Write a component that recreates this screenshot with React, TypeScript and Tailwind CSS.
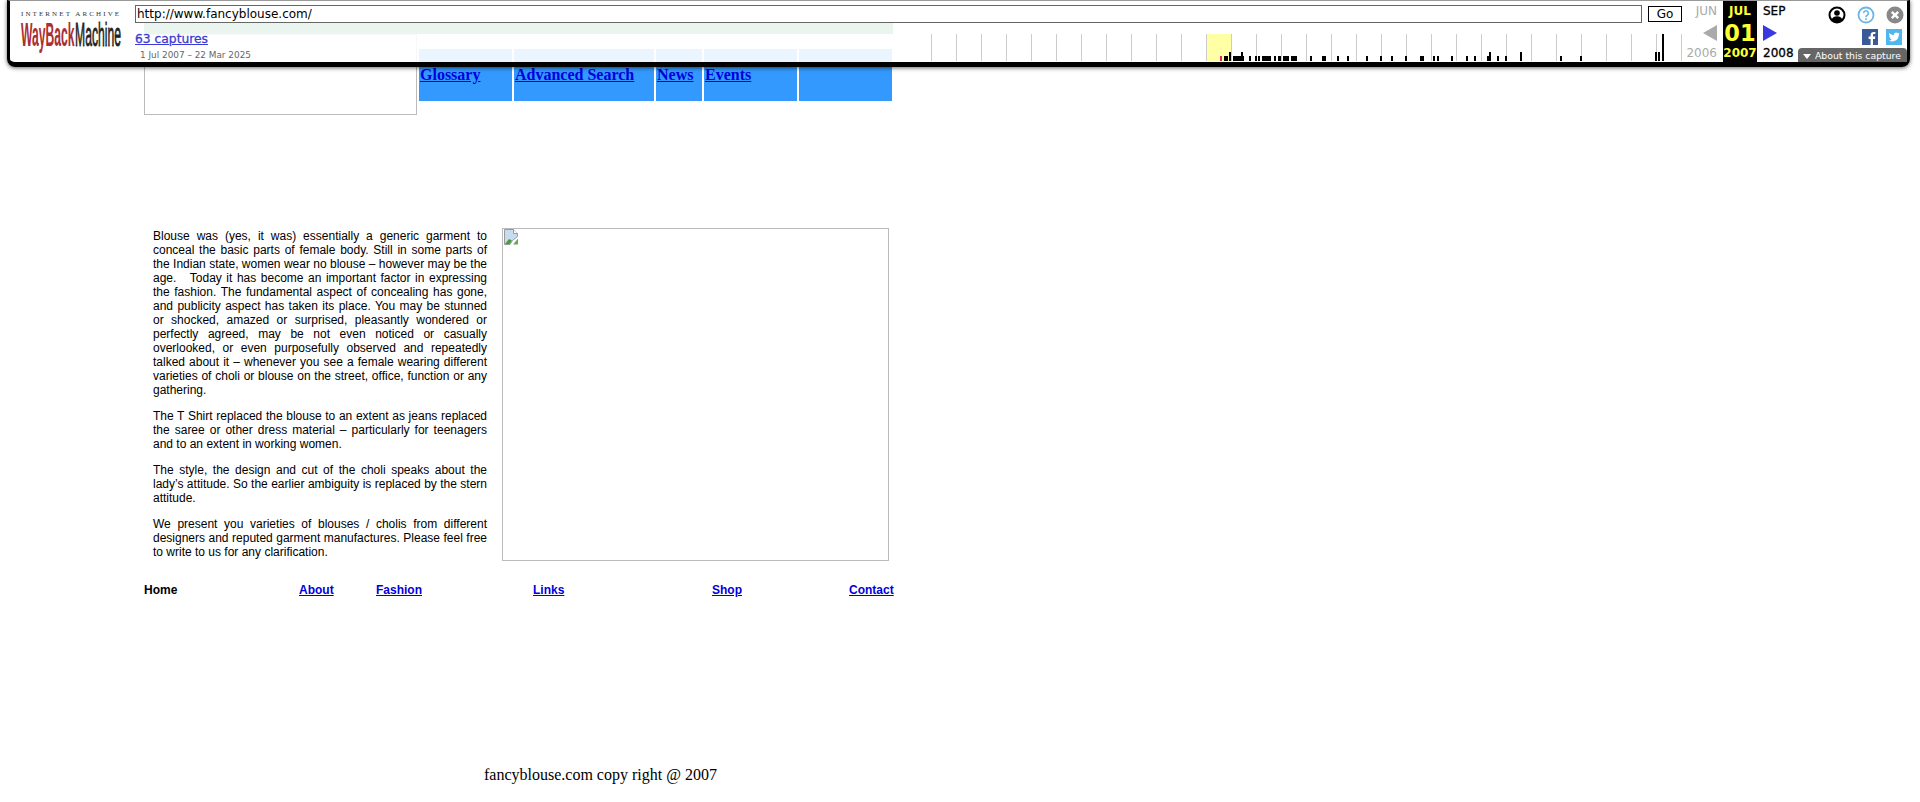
const ticks = Array.from({ length: 31 }, (_, i) => i * 25 + 1);

// x, width, height of each capture bar, measured from the left edge of the chart at x=930
const bars: [number, number, number][] = [
  [294, 4, 5], [299, 2, 9], [303, 11, 5], [311, 2, 9], [319, 2, 5], [325, 2, 5], [328, 2, 5],
  [332, 9, 5], [344, 2, 5], [348, 3, 5], [353, 6, 5], [361, 6, 5], [380, 2, 5], [392, 4, 5],
  [407, 2, 5], [417, 2, 5], [436, 2, 5], [450, 2, 5], [461, 2, 5], [475, 2, 5], [490, 4, 5],
  [503, 2, 5], [507, 2, 5], [521, 2, 5], [536, 2, 5], [544, 2, 5], [557, 2, 5], [559, 2, 9],
  [567, 2, 5], [575, 2, 5], [590, 2, 9], [630, 2, 5], [650, 2, 5], [725, 2, 9], [728, 2, 9],
  [732, 2, 27],
];

function Sparkline() {
  return (
    <svg width="754" height="27" viewBox="0 0 754 27" className="block">
      <rect x="276" y="0" width="25" height="27" fill="#ffffa5" />
      {ticks.map((x) => (
        <rect key={x} x={x} y="0" width="1" height="27" fill="#ccc" />
      ))}
      <rect x="290" y="22" width="2" height="5" fill="#e0246c" />
      {bars.map(([x, w, h]) => (
        <rect key={x} x={x} y={27 - h} width={w} height={h} fill="#000" />
      ))}
    </svg>
  );
}

function Logo() {
  return (
    <svg width="102" height="42" viewBox="0 0 102 42" className="block overflow-visible">
      <text x="0" y="6" fontSize="7" letterSpacing="2.1" fontFamily="'Liberation Serif', serif" fill="#333">
        INTERNET ARCHIVE
      </text>
      <text transform="translate(0 36) scale(0.368 1)" fontSize="33" fontWeight="700" fontFamily="'Liberation Sans', sans-serif" fill="#ab2e33">
        WayBack
      </text>
      <text transform="translate(54 36) scale(0.369 1)" fontSize="33" fontFamily="'Liberation Sans', sans-serif" fill="#222" stroke="#222" strokeWidth="0.8">
        Machine
      </text>
    </svg>
  );
}

const UserIcon = () => (
  <svg width="18" height="18" viewBox="0 0 18 18">
    <circle cx="9" cy="9" r="7.5" fill="#fff" stroke="#000" strokeWidth="2" />
    <circle cx="9" cy="7" r="2.8" fill="#000" />
    <path d="M3.5 14c1-3 3-3.8 5.5-3.8s4.5.8 5.5 3.8a7.5 7.5 0 0 1-11 0z" fill="#000" />
  </svg>
);

const HelpIcon = () => (
  <svg width="18" height="18" viewBox="0 0 18 18">
    <circle cx="9" cy="9" r="7.5" fill="#fff" stroke="#6bb5e8" strokeWidth="1.8" />
    <path d="M6.6 7.2a2.4 2.4 0 1 1 3.6 2.1c-.8.5-1.2.9-1.2 1.9" fill="none" stroke="#6bb5e8" strokeWidth="1.6" />
    <circle cx="9" cy="13.2" r="1" fill="#6bb5e8" />
  </svg>
);

const CloseIcon = () => (
  <svg width="18" height="18" viewBox="0 0 18 18">
    <circle cx="9" cy="9" r="8.5" fill="#888" />
    <path d="M5.8 5.8l6.4 6.4M12.2 5.8l-6.4 6.4" stroke="#fff" strokeWidth="2.4" />
  </svg>
);

const FacebookIcon = () => (
  <svg width="16" height="16" viewBox="0 0 16 16">
    <rect width="16" height="16" fill="#3b5998" />
    <path d="M11 16v-6h2l.3-2.4H11V6.2c0-.7.2-1.1 1.2-1.1h1.2V3c-.3 0-1-.1-1.8-.1-1.8 0-3 1.1-3 3v1.7h-2V10h2v6z" fill="#fff" />
  </svg>
);

const TwitterIcon = () => (
  <svg width="16" height="16" viewBox="0 0 16 16">
    <rect width="16" height="16" fill="#4fb6ee" />
    <path d="M13.5 4.6c-.4.2-.8.3-1.3.4.5-.3.8-.7 1-1.2-.4.3-.9.4-1.4.5a2.2 2.2 0 0 0-3.8 2C6.200 6.200 4.600 5.300 3.500 4c-.6 1-.3 2.300.7 3-.4 0-.7-.1-1-.3 0 1.100.8 2 1.800 2.200-.3.1-.7.1-1 0 .3.900 1.100 1.500 2.100 1.500-1 .8-2.200 1.100-3.300 1 4.800 2.800 10.300-.4 10-5.800.4-.3.8-.6 1.200-1z" fill="#fff" />
  </svg>
);

const BrokenImage = () => (
  <svg width="16" height="16" viewBox="0 0 16 16" className="block">
    <path d="M1.500 .5h9l4 4v3l-5 4-2.500 4h-5.500z" fill="#c8dcf0" stroke="#9a9a9a" />
    <path d="M10.500 .5v4h4" fill="#fff" stroke="#9a9a9a" />
    <path d="M2 15l4-5 3 1.500-2.500 3.500z" fill="#4c9a3a" />
    <path d="M15 9.500v6h-5z" fill="#6aa84f" />
  </svg>
);

function Toolbar() {
  return (
    <div className="absolute left-[7px] top-0 flex h-[67px] w-[1903px] rounded-b-[8px] border-x-[3px] border-b-[5px] border-t border-x-black border-b-black border-t-[#999] bg-white/90 shadow-[0_1px_4px_rgba(0,0,0,0.6)] [font-family:'DejaVu_Sans',sans-serif]">
      <div className="w-[125px] shrink-0 pl-[11px] pt-[9px]">
        <Logo />
      </div>

      <div className="w-[1549px] shrink-0">
        <div className="mt-[4px] flex items-start">
          <div className="flex h-[18px] w-[1507px] items-center border border-[#666] bg-white pl-[1px] text-[12px] text-black">
            http://www.fancyblouse.com/
          </div>
          <div className="ml-[6px] mt-[1px] flex h-[16px] w-[34px] items-center justify-center border border-black bg-white text-[12px] text-black">
            Go
          </div>
        </div>
        <div className="flex justify-between">
          <div className="pt-[9px]">
            <a href="#" className="block text-[12.3px] leading-[15px] text-[#3b3bd6] underline [-webkit-text-stroke:0.3px_#3b3bd6]">
              63 captures
            </a>
            <div className="mt-[3px] pl-[5px] text-[8.9px] leading-[11px] text-[#666]">1 Jul 2007 – 22 Mar 2025</div>
          </div>
          <div className="mt-[11px]">
            <Sparkline />
          </div>
        </div>
      </div>

      <div className="flex w-[39px] shrink-0 flex-col items-end pr-[6px] text-[#aaa]">
        <div className="mt-[3px] text-[12px] leading-[14px]">JUN</div>
        <div className="ml-auto mt-[7px] h-0 w-0 border-y-[8px] border-r-[14px] border-y-transparent border-r-[#aaa]" />
        <div className="mt-[5px] text-[12px] leading-[14px]">2006</div>
      </div>

      <div className="flex w-[34px] shrink-0 flex-col items-center bg-black font-bold text-[#ffff33]">
        <div className="mt-[3px] text-[12px] leading-[14px]">JUL</div>
        <div className="mt-[2px] text-[22.5px] leading-[27px]">01</div>
        <div className="text-[12px] leading-[13px]">2007</div>
      </div>

      <div className="flex w-[41px] shrink-0 flex-col pl-[6px] text-black">
        <div className="mt-[3px] text-[12px] leading-[14px] [-webkit-text-stroke:0.3px_#000]">SEP</div>
        <div className="mt-[7px] h-0 w-0 border-y-[8px] border-l-[14px] border-y-transparent border-l-[#3939e0]" />
        <div className="mt-[5px] text-[12px] leading-[14px] [-webkit-text-stroke:0.3px_#000]">2008</div>
      </div>

      <div className="flex w-[109px] shrink-0 flex-col items-end">
        <div className="mt-[5px] flex items-center gap-[11px] pr-[3px]">
          <UserIcon />
          <HelpIcon />
          <CloseIcon />
        </div>
        <div className="mt-[5px] flex gap-[8px] pr-[5px]">
          <FacebookIcon />
          <TwitterIcon />
        </div>
        <div className="mt-[3px] flex h-[14px] w-[109px] items-center gap-[4px] rounded-t-[4px] bg-[#666] pl-[5px] pt-[2px] text-[9.3px] leading-[12px] text-white">
          <span className="h-0 w-0 border-x-[4px] border-t-[5px] border-x-transparent border-t-white" />
          About this capture
        </div>
      </div>
    </div>
  );
}

const headerLinks = [
  { label: 'Glossary', width: 'w-[93px]' },
  { label: 'Advanced Search', width: 'w-[140px]' },
  { label: 'News', width: 'w-[46px]' },
  { label: 'Events', width: 'w-[93px]' },
  { label: '', width: 'w-[93px]' },
];

export default function App() {
  return (
    <div className="relative h-[802px] overflow-hidden bg-white text-black [font-family:'Liberation_Sans',sans-serif]">
      <div className="ml-[144px] w-[750px] pt-[23px]">
        <div className="h-[11px] w-[749px] bg-[#339966]" />

        <div className="flex">
          <div className="h-[81px] w-[273px] border border-[#bbb]" />
          <div className="ml-[2px] mt-[15px] flex h-[52px] gap-[2px]">
            {headerLinks.map((item) => (
              <div key={item.width + item.label} className={`${item.width} bg-[#3399ff] pl-[1px] pt-[16px] text-[16px] font-bold leading-[19px] [font-family:'Liberation_Serif',serif]`}>
                {item.label && (
                  <a href="#" className="text-[#0000dd] underline">
                    {item.label}
                  </a>
                )}
              </div>
            ))}
          </div>
        </div>

        <div className="mt-[113px] flex items-start">
          <div className="ml-[9px] w-[334px] pt-[1px] text-justify text-[12px] leading-[14px]">
            <p>
              Blouse was (yes, it was) essentially a generic garment to conceal the basic parts of female body. Still in some parts of the Indian state, women wear no blouse – however may be the age.&nbsp;&nbsp; Today it has become an important factor in expressing the fashion. The fundamental aspect of concealing has gone, and publicity aspect has taken its place. You may be stunned or shocked, amazed or surprised, pleasantly wondered or perfectly agreed, may be not even noticed or casually overlooked, or even purposefully observed and repeatedly talked about it – whenever you see a female wearing different varieties of choli or blouse on the street, office, function or any gathering.
            </p>
            <p className="mt-[12px]">
              The T Shirt replaced the blouse to an extent as jeans replaced the saree or other dress material – particularly for teenagers and to an extent in working women.
            </p>
            <p className="mt-[12px]">
              The style, the design and cut of the choli speaks about the lady’s attitude. So the earlier ambiguity is replaced by the stern attitude.
            </p>
            <p className="mt-[12px]">
              We present you varieties of blouses / cholis from different designers and reputed garment manufactures. Please feel free to write to us for any clarification.
            </p>
          </div>
          <div className="ml-[15px] h-[333px] w-[387px] border border-[#bbb]">
            <BrokenImage />
          </div>
        </div>

        <div className="mt-[22px] flex text-[12px] font-bold leading-[14px]">
          <span className="w-[155px]">Home</span>
          <a href="#" className="w-[77px] text-[#0000dd] underline">About</a>
          <a href="#" className="w-[157px] text-[#0000dd] underline">Fashion</a>
          <a href="#" className="w-[179px] text-[#0000dd] underline">Links</a>
          <a href="#" className="w-[137px] text-[#0000dd] underline">Shop</a>
          <a href="#" className="text-[#0000dd] underline">Contact</a>
        </div>

        <div className="ml-[340px] mt-[169px] whitespace-nowrap text-[16px] leading-[18px] [font-family:'Liberation_Serif',serif]">
          fancyblouse.com copy right @ 2007
        </div>
      </div>

      <Toolbar />
    </div>
  );
}
